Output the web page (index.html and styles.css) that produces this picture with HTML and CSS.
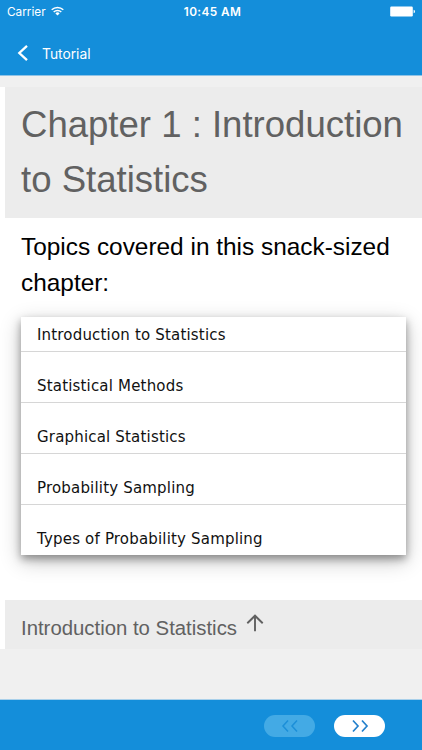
FILE: index.html
```html
<!DOCTYPE html>
<html lang="en">
<head>
    <meta charset="UTF-8">
    <meta name="viewport" content="width=device-width, initial-scale=1.0">
    <title>Tutorial</title>
    <link rel="stylesheet" href="styles.css">
</head>
<body>
    <header class="header">
        <div class="status-bar">
            <div class="carrier">
                <span>Carrier</span>
                <svg class="wifi" width="13" height="10" viewBox="0 0 13 10" fill="none" stroke="#fff" stroke-width="1.5">
                    <path d="M0.7 3.8a8.4 8.4 0 0 1 11.6 0"/>
                    <path d="M2.7 6a5.5 5.5 0 0 1 7.6 0"/>
                    <path d="M6.5 9.4L4.4 7.4a3 3 0 0 1 4.2 0z" fill="#fff" stroke="none"/>
                </svg>
            </div>
            <div class="time">10:45 AM</div>
            <svg class="battery" width="26" height="11" viewBox="0 0 26 11" fill="#fff">
                <rect x="0.2" y="0.5" width="22.6" height="10" rx="1.2"/>
                <path d="M23.6 3.7q1.4 .3 1.4 1.8t-1.4 1.8z"/>
            </svg>
        </div>
        <div class="nav-bar">
            <svg class="back-icon" width="12" height="18" viewBox="0 0 12 18" fill="none" stroke="#fff" stroke-width="2.3">
                <path d="M10 1.8L2.3 9L10 16.2"/>
            </svg>
            <span class="nav-title">Tutorial</span>
        </div>
    </header>

    <main class="content">
        <h1>Chapter 1 : Introduction to Statistics</h1>
        <div class="topics">
            <h2>Topics covered in this snack-sized chapter:</h2>
            <ul class="topic-list">
                <li>Introduction to Statistics</li>
                <li>Statistical Methods</li>
                <li>Graphical Statistics</li>
                <li>Probability Sampling</li>
                <li>Types of Probability Sampling</li>
            </ul>
        </div>
        <h3>
            <span>Introduction to Statistics</span>
            <svg class="up-icon" width="18" height="18" viewBox="0 0 18 18" fill="none" stroke="#616161" stroke-width="1.9">
                <path d="M9 17.2V2M1.3 9.3L9 1.7L16.7 9.3"/>
            </svg>
        </h3>
    </main>

    <footer class="footer">
        <button class="pager" disabled>
            <svg width="18" height="14" viewBox="0 0 18 14" fill="none" stroke="#1c8fd8" stroke-width="1.5">
                <path d="M7 1.5L2 7L7 12.5M16 1.5L11 7L16 12.5"/>
            </svg>
        </button>
        <button class="pager">
            <svg width="18" height="14" viewBox="0 0 18 14" fill="none" stroke="#2480cc" stroke-width="1.7">
                <path d="M2 1.5L7 7L2 12.5M11 1.5L16 7L11 12.5"/>
            </svg>
        </button>
    </footer>
</body>
</html>
```
FILE: styles.css
```css
* {
    margin: 0;
    padding: 0;
    box-sizing: border-box;
}

body {
    height: 100vh;
    display: flex;
    flex-direction: column;
    font-family: "Liberation Sans", Arial, sans-serif;
    background: #f0f0f0;
    overflow: hidden;
}

.header {
    height: 76px;
    background: #148eda;
    border-bottom: 1px solid #8fc3e6;
    color: #fff;
    font-family: Inter, sans-serif;
}

.status-bar {
    height: 22px;
    padding: 0 6px 0 7px;
    display: grid;
    grid-template-columns: 1fr auto 1fr;
    align-items: center;
}

.carrier {
    display: flex;
    align-items: center;
    gap: 5px;
    padding-top: 1px;
    font-size: 11.8px;
}

.wifi {
    margin-top: -2px;
}

.time {
    padding: 1px 0 0 2px;
    font-size: 11.8px;
    font-weight: 600;
    letter-spacing: 0.4px;
}

.battery {
    justify-self: end;
}

.nav-bar {
    height: 53px;
    padding: 9px 17px 0;
    display: flex;
    align-items: center;
    gap: 13px;
}

.nav-title {
    padding-top: 1px;
    font-size: 13.8px;
}

.content {
    margin-top: 11px;
    padding-left: 4.5px;
    background: #fff;
    height: 562px;
}

h1,
h3 {
    background: #ececec;
    color: #616161;
    font-weight: normal;
    padding: 0 16px 0 16.5px;
}

h1 {
    height: 130.5px;
    padding-top: 10px;
    font-size: 36.55px;
    line-height: 55px;
}

.topics {
    height: 382.5px;
    padding: 11px 16px 0 16.5px;
}

h2 {
    font-size: 24.4px;
    font-weight: normal;
    line-height: 36.7px;
    color: #000;
}

.topic-list {
    width: 385px;
    height: 238px;
    margin-top: 15.5px;
    list-style: none;
    background: #fff;
    box-shadow: 0 4px 8px rgba(0, 0, 0, 0.35), 0 6px 20px rgba(0, 0, 0, 0.24);
}

.topic-list li {
    height: 51px;
    padding: 24px 16px 0;
    border-bottom: 1px solid #d6d6d6;
    font-family: "DejaVu Sans", Verdana, sans-serif;
    font-size: 15px;
    letter-spacing: 0.18px;
    line-height: 20px;
    color: #111;
}

.topic-list li:first-child {
    height: 35px;
    padding-top: 8px;
}

.topic-list li:last-child {
    border-bottom: none;
}

h3 {
    height: 49px;
    display: flex;
    gap: 9px;
    font-size: 20.35px;
    line-height: 56px;
}

.up-icon {
    margin-top: 14px;
}

.footer {
    height: 51px;
    margin-top: auto;
    padding: 1px 37px 0;
    display: flex;
    align-items: center;
    justify-content: flex-end;
    gap: 19px;
    background: #148eda;
    border-top: 1px solid #a9d0ea;
}

.pager {
    width: 51px;
    height: 22px;
    display: flex;
    align-items: center;
    justify-content: center;
    border: none;
    border-radius: 11px;
    background: #fff;
}

.pager:disabled {
    background: #43aae5;
}
```
